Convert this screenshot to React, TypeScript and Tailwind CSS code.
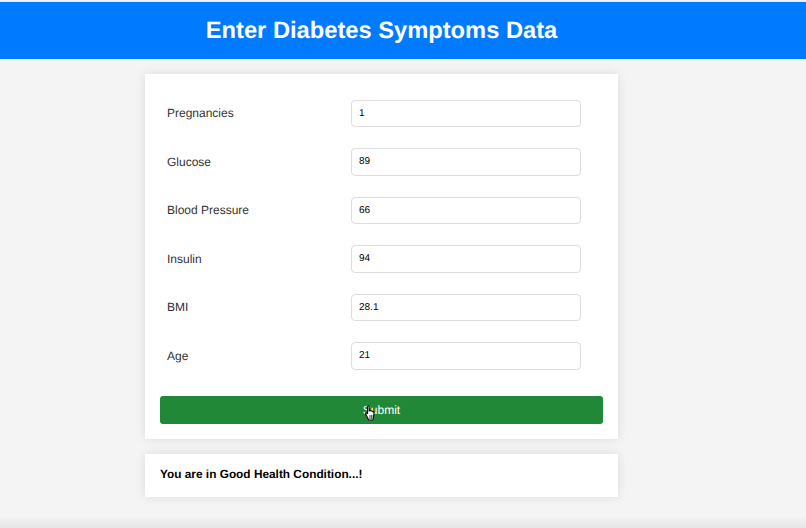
const fields = [
  { name: "Pregnancies", value: "1" },
  { name: "Glucose", value: "89" },
  { name: "Blood Pressure", value: "66" },
  { name: "Insulin", value: "94" },
  { name: "BMI", value: "28.1" },
  { name: "Age", value: "21" },
];

function HandCursor() {
  return (
    <svg
      viewBox="0 0 12 17"
      className="absolute left-[204px] top-[9px] w-[13px] h-[17px]"
    >
      <path
        d="M3 1.2c.7-.6 1.600-.2 1.700.7v4l.6-.2c.6-.2 1.100 0 1.300.4.6-.2 1.200 0 1.400.5.6-.2 1.300.1 1.400.7.1 1.500.1 3-.3 4.300l-.6 3.400H4.200L1.300 9.300c-.5-.7.3-1.600 1-1.200l.7.5V2c0-.3 0-.6 0-.8z"
        fill="#fff"
        stroke="#111"
        strokeWidth="1.200"
        strokeLinejoin="round"
      />
      <path d="M5.500 10v4M7.200 10v4M8.800 10v4" stroke="#111" strokeWidth="0.800" />
    </svg>
  );
}

export default function App() {
  return (
    <div className="h-[528px] overflow-hidden flex flex-col bg-[#f4f4f4] font-['Liberation_Sans',Arial,sans-serif] [text-rendering:geometricPrecision]">
      <div className="h-[2px] bg-[#eef3f7]" />
      <header className="h-[57px] bg-[#007bff] flex items-center justify-center pr-[43px] pt-[2px]">
        <h1 className="text-[23.7px] font-bold text-white">Enter Diabetes Symptoms Data</h1>
      </header>

      <main className="flex-1 flex flex-col items-center pt-[15px] gap-[15px] pr-[43px]">
        <form className="w-[473px] h-[365px] bg-white shadow-[0_0_10px_rgba(0,0,0,0.1)] px-[15px] pt-[25.6px]">
          <div className="flex flex-col gap-[21px]">
            {fields.map((f) => (
              <div key={f.name} className="h-[27.5px] flex items-center">
                <label className="w-[191px] pl-[7px] shrink-0 text-[12px] text-[#333]">{f.name}</label>
                <input
                  readOnly
                  value={f.value}
                  className="w-[230px] h-full bg-white border border-[#ddd] rounded-[4px] px-[7px] text-[10px] text-black outline-none [text-rendering:geometricPrecision]"
                />
              </div>
            ))}
          </div>
          <button
            type="button"
            className="relative block w-[443px] h-[28px] mt-[26.4px] bg-[#218838] rounded-[3px] text-[12px] text-white [text-rendering:geometricPrecision]"
          >
            Submit
            <HandCursor />
          </button>
        </form>

        <div className="w-[473px] h-[43px] bg-white shadow-[0_0_10px_rgba(0,0,0,0.1)] px-[15px] pb-[1px] flex items-center">
          <p className="text-[11.85px] font-bold text-black">You are in Good Health Condition...!</p>
        </div>
      </main>

      <div className="h-[13px] bg-gradient-to-b from-[#f4f4f4] to-[#e6e6e6]" />
    </div>
  );
}
